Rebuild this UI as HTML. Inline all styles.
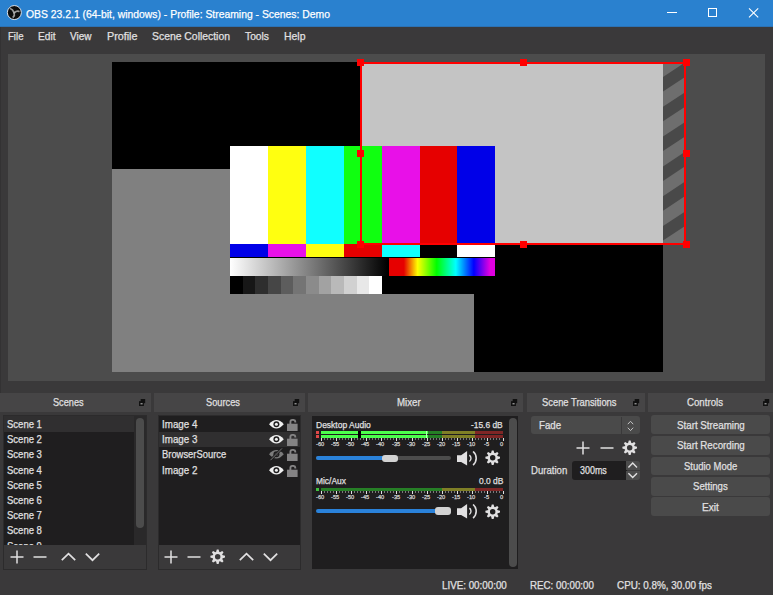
<!DOCTYPE html>
<html lang="en">
<head>
<meta charset="utf-8">
<title>OBS 23.2.1 (64-bit, windows) - Profile: Streaming - Scenes: Demo</title>
<style>
html,body{margin:0;padding:0;}
body{width:773px;height:595px;overflow:hidden;background:#3a393a;position:relative;
  font-family:"Liberation Sans",sans-serif;color:#e1e0e1;}
.abs,.t,i,svg.ic{position:absolute;}
.t{white-space:nowrap;line-height:0;height:0;transform-origin:0 0;color:#e1e0e1;display:block;-webkit-text-stroke:0.25px;}
i{display:block;width:1px;}
#titlebar{left:0;top:0;width:773px;height:27px;background:#2a81cf;}
#edge{left:0;top:27px;width:1px;height:366px;background:#333233;}
#preview{left:8px;top:54px;width:757px;height:327px;background:#4c4c4c;}
.dock{top:393px;height:18.5px;background:#464546;}
.list{background:#1f1e1f;overflow:hidden;}
.frame{border:1px solid #2c2b2c;box-sizing:border-box;}
.sel{background:#302f30;}
.sbar{background:#4c4c4c;border-radius:4px;}
.btn{left:651.2px;width:119.2px;height:18.8px;background:#4a4a4a;border-radius:3px;}
</style>
</head>
<body>
<!-- title bar -->
<div id="titlebar" class="abs"></div>
<div id="edge" class="abs"></div>
<div class="abs" style="left:0;top:26px;width:773px;height:1px;background:#2c72b4"></div>

<!-- preview -->
<div id="preview" class="abs">
<svg width="757" height="327" viewBox="8 54 757 327" style="position:absolute;left:0;top:0" shape-rendering="crispEdges">
  <defs>
    <linearGradient id="gw" x1="0" x2="1" y1="0" y2="0"><stop offset="0" stop-color="#fff"/><stop offset="1" stop-color="#000"/></linearGradient>
    <linearGradient id="rb" x1="0" x2="1" y1="0" y2="0">
      <stop offset="0" stop-color="#e60000"/><stop offset="0.14" stop-color="#e60000"/>
      <stop offset="0.27" stop-color="#ffff00"/><stop offset="0.45" stop-color="#00ff00"/>
      <stop offset="0.63" stop-color="#00ffff"/><stop offset="0.80" stop-color="#0000ff"/>
      <stop offset="0.95" stop-color="#e000e0"/><stop offset="1" stop-color="#e000e0"/>
    </linearGradient>
    <clipPath id="hc"><rect x="663" y="63" width="22.5" height="181"/></clipPath>
  </defs>
  <!-- canvas -->
  <rect x="112" y="62" width="551" height="310" fill="#000"/>
  <!-- Image 2: gray -->
  <rect x="112" y="169" width="362" height="203" fill="#808080"/>
  <!-- Image 3: light gray (selected) -->
  <rect x="361" y="63" width="302" height="181" fill="#c4c4c4"/>
  <rect x="663" y="63" width="22.5" height="181" fill="#6e6e6e"/>
  <g clip-path="url(#hc)" shape-rendering="geometricPrecision"><polygon points="663,17.4 685.5,2.5 685.5,17.0 663,31.9" fill="#494949"/><polygon points="663,47.2 685.5,32.4 685.5,46.9 663,61.7" fill="#494949"/><polygon points="663,77.0 685.5,62.1 685.5,76.7 663,91.5" fill="#494949"/><polygon points="663,106.8 685.5,91.9 685.5,106.4 663,121.3" fill="#494949"/><polygon points="663,136.6 685.5,121.8 685.5,136.2 663,151.1" fill="#494949"/><polygon points="663,166.4 685.5,151.6 685.5,166.1 663,180.9" fill="#494949"/><polygon points="663,196.2 685.5,181.3 685.5,195.8 663,210.7" fill="#494949"/><polygon points="663,226.0 685.5,211.2 685.5,225.7 663,240.5" fill="#494949"/><polygon points="663,255.8 685.5,241.0 685.5,255.5 663,270.3" fill="#494949"/></g>
  <!-- Image 4: colour bars -->
  <rect x="230" y="146" width="265" height="148.4" fill="#000"/>
  <rect x="230" y="146" width="38" height="98" fill="#ffffff"/>
  <rect x="268" y="146" width="38" height="98" fill="#ffff10"/>
  <rect x="306" y="146" width="38" height="98" fill="#10ffff"/>
  <rect x="344" y="146" width="38" height="98" fill="#10ff10"/>
  <rect x="382" y="146" width="38" height="98" fill="#e810e8"/>
  <rect x="420" y="146" width="37" height="98" fill="#e60000"/>
  <rect x="457" y="146" width="38" height="98" fill="#0000e8"/>
  <rect x="230" y="244" width="38" height="13" fill="#0000e8"/>
  <rect x="268" y="244" width="38" height="13" fill="#e810e8"/>
  <rect x="306" y="244" width="38" height="13" fill="#ffff10"/>
  <rect x="344" y="244" width="38" height="13" fill="#e60000"/>
  <rect x="382" y="244" width="38" height="13" fill="#10ffff"/>
  <rect x="420" y="244" width="37" height="13" fill="#000000"/>
  <rect x="457" y="244" width="38" height="13" fill="#ffffff"/>
  <rect x="230" y="258" width="158" height="17.6" fill="url(#gw)"/>
  <rect x="389" y="258" width="106" height="17.6" fill="url(#rb)"/>
  <g id="steps"></g>
  <rect x="230.00" y="276" width="12.97" height="18.4" fill="rgb(0,0,0)"/><rect x="242.67" y="276" width="12.97" height="18.4" fill="rgb(23,23,23)"/><rect x="255.33" y="276" width="12.97" height="18.4" fill="rgb(46,46,46)"/><rect x="268.00" y="276" width="12.97" height="18.4" fill="rgb(70,70,70)"/><rect x="280.67" y="276" width="12.97" height="18.4" fill="rgb(93,93,93)"/><rect x="293.33" y="276" width="12.97" height="18.4" fill="rgb(116,116,116)"/><rect x="306.00" y="276" width="12.97" height="18.4" fill="rgb(139,139,139)"/><rect x="318.67" y="276" width="12.97" height="18.4" fill="rgb(162,162,162)"/><rect x="331.33" y="276" width="12.97" height="18.4" fill="rgb(185,185,185)"/><rect x="344.00" y="276" width="12.97" height="18.4" fill="rgb(209,209,209)"/><rect x="356.67" y="276" width="12.97" height="18.4" fill="rgb(232,232,232)"/><rect x="369.33" y="276" width="12.97" height="18.4" fill="rgb(255,255,255)"/>
  <!-- selection box -->
  <g fill="none" stroke="#ff0000" stroke-width="2">
    <rect x="361" y="63" width="323.7" height="181"/>
  </g>
  <g fill="#ff0000">
    <rect x="356.6" y="59" width="7" height="6.8"/><rect x="519.5" y="59" width="7" height="6.8"/><rect x="683" y="59" width="7" height="6.8"/>
    <rect x="356.6" y="150" width="7" height="7"/><rect x="683" y="150" width="7" height="7"/>
    <rect x="356.6" y="241.4" width="7" height="7"/><rect x="519.5" y="241.4" width="7" height="7"/><rect x="683" y="241.4" width="7" height="7"/>
  </g>
</svg>
</div>

<!-- dock title bars -->
<div class="abs dock" style="left:0;width:151px"></div>
<div class="abs dock" style="left:154px;width:151px"></div>
<div class="abs dock" style="left:308px;width:215px"></div>
<div class="abs dock" style="left:527px;width:117.5px"></div>
<div class="abs dock" style="left:648px;width:125px"></div>

<!-- Scenes dock -->
<div class="abs frame" style="left:3px;top:415px;width:144px;height:155px"></div>
<div class="abs list" style="left:4px;top:416px;width:130px;height:128.7px">
  <div class="abs sel" style="left:0;top:0;width:130px;height:15.6px"></div>
<span class="t" style="left:3.1px;top:8.05px;font-size:11.4px;transform:scaleX(0.8347)">Scene 1</span>
<span class="t" style="left:3.1px;top:23.25px;font-size:11.4px;transform:scaleX(0.8347)">Scene 2</span>
<span class="t" style="left:3.1px;top:38.45px;font-size:11.4px;transform:scaleX(0.8347)">Scene 3</span>
<span class="t" style="left:3.1px;top:53.65px;font-size:11.4px;transform:scaleX(0.8347)">Scene 4</span>
<span class="t" style="left:3.1px;top:68.85px;font-size:11.4px;transform:scaleX(0.8347)">Scene 5</span>
<span class="t" style="left:3.1px;top:84.05px;font-size:11.4px;transform:scaleX(0.8347)">Scene 6</span>
<span class="t" style="left:3.1px;top:99.25px;font-size:11.4px;transform:scaleX(0.8347)">Scene 7</span>
<span class="t" style="left:3.1px;top:114.45px;font-size:11.4px;transform:scaleX(0.8347)">Scene 8</span>
<span class="t" style="left:3.1px;top:129.65px;font-size:11.4px;transform:scaleX(0.8347)">Scene 9</span>

</div>
<div class="abs" style="left:134px;top:416px;width:12px;height:128.7px;background:#2a292a"></div>
<div class="abs sbar" style="left:136px;top:418px;width:8px;height:110px"></div>

<!-- Sources dock -->
<div class="abs frame" style="left:157.5px;top:415px;width:143.5px;height:155px"></div>
<div class="abs list" style="left:158.5px;top:416px;width:141.8px;height:128.8px">
  <div class="abs sel" style="left:0;top:15.5px;width:143px;height:15.3px"></div>
</div>

<!-- Mixer dock -->
<div class="abs list" style="left:312px;top:415.5px;width:206.3px;height:153.8px"></div>
<div class="abs sbar" style="left:509px;top:418px;width:8px;height:149px"></div>
<!-- desktop audio meter -->
<div class="abs" style="left:316px;top:431px;width:3px;height:3px;background:#e04848"></div>
<div class="abs" style="left:316px;top:435px;width:3px;height:3px;background:#e04848"></div>
<div class="abs" style="left:321px;top:431px;width:182px;height:3px;background:linear-gradient(90deg,#4cff4c 0,#4cff4c 107.5px,#267f26 107.5px,#267f26 121px,#7f7f26 121px,#7f7f26 154.5px,#7f2626 154.5px)"></div>
<div class="abs" style="left:321px;top:435px;width:182px;height:3px;background:linear-gradient(90deg,#4cff4c 0,#4cff4c 107.5px,#267f26 107.5px,#267f26 121px,#7f7f26 121px,#7f7f26 154.5px,#7f2626 154.5px)"></div>
<div class="abs" style="left:358px;top:431px;width:3px;height:7px;background:#000"></div>
<div class="abs" style="left:426px;top:431px;width:1px;height:7px;background:#b4ffb4"></div>
<i style="left:320.50px;top:438px;height:2.5px;background:#e1e0e1"></i><i style="left:323.53px;top:438px;height:1.5px;background:#7a797a"></i><i style="left:326.57px;top:438px;height:1.5px;background:#7a797a"></i><i style="left:329.60px;top:438px;height:1.5px;background:#7a797a"></i><i style="left:332.63px;top:438px;height:1.5px;background:#7a797a"></i><i style="left:335.67px;top:438px;height:2.5px;background:#e1e0e1"></i><i style="left:338.70px;top:438px;height:1.5px;background:#7a797a"></i><i style="left:341.73px;top:438px;height:1.5px;background:#7a797a"></i><i style="left:344.77px;top:438px;height:1.5px;background:#7a797a"></i><i style="left:347.80px;top:438px;height:1.5px;background:#7a797a"></i><i style="left:350.83px;top:438px;height:2.5px;background:#e1e0e1"></i><i style="left:353.87px;top:438px;height:1.5px;background:#7a797a"></i><i style="left:356.90px;top:438px;height:1.5px;background:#7a797a"></i><i style="left:359.93px;top:438px;height:1.5px;background:#7a797a"></i><i style="left:362.97px;top:438px;height:1.5px;background:#7a797a"></i><i style="left:366.00px;top:438px;height:2.5px;background:#e1e0e1"></i><i style="left:369.03px;top:438px;height:1.5px;background:#7a797a"></i><i style="left:372.07px;top:438px;height:1.5px;background:#7a797a"></i><i style="left:375.10px;top:438px;height:1.5px;background:#7a797a"></i><i style="left:378.13px;top:438px;height:1.5px;background:#7a797a"></i><i style="left:381.17px;top:438px;height:2.5px;background:#e1e0e1"></i><i style="left:384.20px;top:438px;height:1.5px;background:#7a797a"></i><i style="left:387.23px;top:438px;height:1.5px;background:#7a797a"></i><i style="left:390.27px;top:438px;height:1.5px;background:#7a797a"></i><i style="left:393.30px;top:438px;height:1.5px;background:#7a797a"></i><i style="left:396.33px;top:438px;height:2.5px;background:#e1e0e1"></i><i style="left:399.37px;top:438px;height:1.5px;background:#7a797a"></i><i style="left:402.40px;top:438px;height:1.5px;background:#7a797a"></i><i style="left:405.43px;top:438px;height:1.5px;background:#7a797a"></i><i style="left:408.47px;top:438px;height:1.5px;background:#7a797a"></i><i style="left:411.50px;top:438px;height:2.5px;background:#e1e0e1"></i><i style="left:414.53px;top:438px;height:1.5px;background:#7a797a"></i><i style="left:417.57px;top:438px;height:1.5px;background:#7a797a"></i><i style="left:420.60px;top:438px;height:1.5px;background:#7a797a"></i><i style="left:423.63px;top:438px;height:1.5px;background:#7a797a"></i><i style="left:426.67px;top:438px;height:2.5px;background:#e1e0e1"></i><i style="left:429.70px;top:438px;height:1.5px;background:#7a797a"></i><i style="left:432.73px;top:438px;height:1.5px;background:#7a797a"></i><i style="left:435.77px;top:438px;height:1.5px;background:#7a797a"></i><i style="left:438.80px;top:438px;height:1.5px;background:#7a797a"></i><i style="left:441.83px;top:438px;height:2.5px;background:#e1e0e1"></i><i style="left:444.87px;top:438px;height:1.5px;background:#7a797a"></i><i style="left:447.90px;top:438px;height:1.5px;background:#7a797a"></i><i style="left:450.93px;top:438px;height:1.5px;background:#7a797a"></i><i style="left:453.97px;top:438px;height:1.5px;background:#7a797a"></i><i style="left:457.00px;top:438px;height:2.5px;background:#e1e0e1"></i><i style="left:460.03px;top:438px;height:1.5px;background:#7a797a"></i><i style="left:463.07px;top:438px;height:1.5px;background:#7a797a"></i><i style="left:466.10px;top:438px;height:1.5px;background:#7a797a"></i><i style="left:469.13px;top:438px;height:1.5px;background:#7a797a"></i><i style="left:472.17px;top:438px;height:2.5px;background:#e1e0e1"></i><i style="left:475.20px;top:438px;height:1.5px;background:#7a797a"></i><i style="left:478.23px;top:438px;height:1.5px;background:#7a797a"></i><i style="left:481.27px;top:438px;height:1.5px;background:#7a797a"></i><i style="left:484.30px;top:438px;height:1.5px;background:#7a797a"></i><i style="left:487.33px;top:438px;height:2.5px;background:#e1e0e1"></i><i style="left:490.37px;top:438px;height:1.5px;background:#7a797a"></i><i style="left:493.40px;top:438px;height:1.5px;background:#7a797a"></i><i style="left:496.43px;top:438px;height:1.5px;background:#7a797a"></i><i style="left:499.47px;top:438px;height:1.5px;background:#7a797a"></i><i style="left:502.50px;top:438px;height:2.5px;background:#e1e0e1"></i>
<span class="t" style="left:316.20px;top:444.12px;font-size:6px;color:#d4d4d4;transform:scaleX(0.95)">-60</span><span class="t" style="left:330.85px;top:444.12px;font-size:6px;color:#d4d4d4;transform:scaleX(0.95)">-55</span><span class="t" style="left:346.01px;top:444.12px;font-size:6px;color:#d4d4d4;transform:scaleX(0.95)">-50</span><span class="t" style="left:361.18px;top:444.12px;font-size:6px;color:#d4d4d4;transform:scaleX(0.95)">-45</span><span class="t" style="left:376.35px;top:444.12px;font-size:6px;color:#d4d4d4;transform:scaleX(0.95)">-40</span><span class="t" style="left:391.51px;top:444.12px;font-size:6px;color:#d4d4d4;transform:scaleX(0.95)">-35</span><span class="t" style="left:406.68px;top:444.12px;font-size:6px;color:#d4d4d4;transform:scaleX(0.95)">-30</span><span class="t" style="left:421.85px;top:444.12px;font-size:6px;color:#d4d4d4;transform:scaleX(0.95)">-25</span><span class="t" style="left:437.01px;top:444.12px;font-size:6px;color:#d4d4d4;transform:scaleX(0.95)">-20</span><span class="t" style="left:452.18px;top:444.12px;font-size:6px;color:#d4d4d4;transform:scaleX(0.95)">-15</span><span class="t" style="left:467.35px;top:444.12px;font-size:6px;color:#d4d4d4;transform:scaleX(0.95)">-10</span><span class="t" style="left:484.10px;top:444.12px;font-size:6px;color:#d4d4d4;transform:scaleX(0.95)">-5</span><span class="t" style="left:500.42px;top:444.12px;font-size:6px;color:#d4d4d4;transform:scaleX(0.95)">0</span>
<!-- desktop slider -->
<div class="abs" style="left:316px;top:456px;width:135px;height:4px;border-radius:2px;background:#4c4c4c"></div>
<div class="abs" style="left:316px;top:456px;width:75px;height:4px;border-radius:2px;background:#2a82da"></div>
<div class="abs" style="left:381.7px;top:454.6px;width:16px;height:7.5px;border-radius:3px;background:#d2d2d2"></div>
<!-- mic meter -->
<div class="abs" style="left:316px;top:488px;width:3px;height:3px;background:#3fbf3f"></div>
<div class="abs" style="left:321px;top:488px;width:182px;height:3px;background:linear-gradient(90deg,#267f26 0,#267f26 121px,#7f7f26 121px,#7f7f26 154.5px,#7f2626 154.5px)"></div>
<i style="left:320.50px;top:491px;height:2.5px;background:#e1e0e1"></i><i style="left:323.53px;top:491px;height:1.5px;background:#7a797a"></i><i style="left:326.57px;top:491px;height:1.5px;background:#7a797a"></i><i style="left:329.60px;top:491px;height:1.5px;background:#7a797a"></i><i style="left:332.63px;top:491px;height:1.5px;background:#7a797a"></i><i style="left:335.67px;top:491px;height:2.5px;background:#e1e0e1"></i><i style="left:338.70px;top:491px;height:1.5px;background:#7a797a"></i><i style="left:341.73px;top:491px;height:1.5px;background:#7a797a"></i><i style="left:344.77px;top:491px;height:1.5px;background:#7a797a"></i><i style="left:347.80px;top:491px;height:1.5px;background:#7a797a"></i><i style="left:350.83px;top:491px;height:2.5px;background:#e1e0e1"></i><i style="left:353.87px;top:491px;height:1.5px;background:#7a797a"></i><i style="left:356.90px;top:491px;height:1.5px;background:#7a797a"></i><i style="left:359.93px;top:491px;height:1.5px;background:#7a797a"></i><i style="left:362.97px;top:491px;height:1.5px;background:#7a797a"></i><i style="left:366.00px;top:491px;height:2.5px;background:#e1e0e1"></i><i style="left:369.03px;top:491px;height:1.5px;background:#7a797a"></i><i style="left:372.07px;top:491px;height:1.5px;background:#7a797a"></i><i style="left:375.10px;top:491px;height:1.5px;background:#7a797a"></i><i style="left:378.13px;top:491px;height:1.5px;background:#7a797a"></i><i style="left:381.17px;top:491px;height:2.5px;background:#e1e0e1"></i><i style="left:384.20px;top:491px;height:1.5px;background:#7a797a"></i><i style="left:387.23px;top:491px;height:1.5px;background:#7a797a"></i><i style="left:390.27px;top:491px;height:1.5px;background:#7a797a"></i><i style="left:393.30px;top:491px;height:1.5px;background:#7a797a"></i><i style="left:396.33px;top:491px;height:2.5px;background:#e1e0e1"></i><i style="left:399.37px;top:491px;height:1.5px;background:#7a797a"></i><i style="left:402.40px;top:491px;height:1.5px;background:#7a797a"></i><i style="left:405.43px;top:491px;height:1.5px;background:#7a797a"></i><i style="left:408.47px;top:491px;height:1.5px;background:#7a797a"></i><i style="left:411.50px;top:491px;height:2.5px;background:#e1e0e1"></i><i style="left:414.53px;top:491px;height:1.5px;background:#7a797a"></i><i style="left:417.57px;top:491px;height:1.5px;background:#7a797a"></i><i style="left:420.60px;top:491px;height:1.5px;background:#7a797a"></i><i style="left:423.63px;top:491px;height:1.5px;background:#7a797a"></i><i style="left:426.67px;top:491px;height:2.5px;background:#e1e0e1"></i><i style="left:429.70px;top:491px;height:1.5px;background:#7a797a"></i><i style="left:432.73px;top:491px;height:1.5px;background:#7a797a"></i><i style="left:435.77px;top:491px;height:1.5px;background:#7a797a"></i><i style="left:438.80px;top:491px;height:1.5px;background:#7a797a"></i><i style="left:441.83px;top:491px;height:2.5px;background:#e1e0e1"></i><i style="left:444.87px;top:491px;height:1.5px;background:#7a797a"></i><i style="left:447.90px;top:491px;height:1.5px;background:#7a797a"></i><i style="left:450.93px;top:491px;height:1.5px;background:#7a797a"></i><i style="left:453.97px;top:491px;height:1.5px;background:#7a797a"></i><i style="left:457.00px;top:491px;height:2.5px;background:#e1e0e1"></i><i style="left:460.03px;top:491px;height:1.5px;background:#7a797a"></i><i style="left:463.07px;top:491px;height:1.5px;background:#7a797a"></i><i style="left:466.10px;top:491px;height:1.5px;background:#7a797a"></i><i style="left:469.13px;top:491px;height:1.5px;background:#7a797a"></i><i style="left:472.17px;top:491px;height:2.5px;background:#e1e0e1"></i><i style="left:475.20px;top:491px;height:1.5px;background:#7a797a"></i><i style="left:478.23px;top:491px;height:1.5px;background:#7a797a"></i><i style="left:481.27px;top:491px;height:1.5px;background:#7a797a"></i><i style="left:484.30px;top:491px;height:1.5px;background:#7a797a"></i><i style="left:487.33px;top:491px;height:2.5px;background:#e1e0e1"></i><i style="left:490.37px;top:491px;height:1.5px;background:#7a797a"></i><i style="left:493.40px;top:491px;height:1.5px;background:#7a797a"></i><i style="left:496.43px;top:491px;height:1.5px;background:#7a797a"></i><i style="left:499.47px;top:491px;height:1.5px;background:#7a797a"></i><i style="left:502.50px;top:491px;height:2.5px;background:#e1e0e1"></i>
<span class="t" style="left:316.20px;top:496.82px;font-size:6px;color:#d4d4d4;transform:scaleX(0.95)">-60</span><span class="t" style="left:330.85px;top:496.82px;font-size:6px;color:#d4d4d4;transform:scaleX(0.95)">-55</span><span class="t" style="left:346.01px;top:496.82px;font-size:6px;color:#d4d4d4;transform:scaleX(0.95)">-50</span><span class="t" style="left:361.18px;top:496.82px;font-size:6px;color:#d4d4d4;transform:scaleX(0.95)">-45</span><span class="t" style="left:376.35px;top:496.82px;font-size:6px;color:#d4d4d4;transform:scaleX(0.95)">-40</span><span class="t" style="left:391.51px;top:496.82px;font-size:6px;color:#d4d4d4;transform:scaleX(0.95)">-35</span><span class="t" style="left:406.68px;top:496.82px;font-size:6px;color:#d4d4d4;transform:scaleX(0.95)">-30</span><span class="t" style="left:421.85px;top:496.82px;font-size:6px;color:#d4d4d4;transform:scaleX(0.95)">-25</span><span class="t" style="left:437.01px;top:496.82px;font-size:6px;color:#d4d4d4;transform:scaleX(0.95)">-20</span><span class="t" style="left:452.18px;top:496.82px;font-size:6px;color:#d4d4d4;transform:scaleX(0.95)">-15</span><span class="t" style="left:467.35px;top:496.82px;font-size:6px;color:#d4d4d4;transform:scaleX(0.95)">-10</span><span class="t" style="left:484.10px;top:496.82px;font-size:6px;color:#d4d4d4;transform:scaleX(0.95)">-5</span><span class="t" style="left:500.42px;top:496.82px;font-size:6px;color:#d4d4d4;transform:scaleX(0.95)">0</span>
<!-- mic slider -->
<div class="abs" style="left:316px;top:508.5px;width:135px;height:4px;border-radius:2px;background:#2a82da"></div>
<div class="abs" style="left:434.5px;top:507px;width:16.5px;height:7.5px;border-radius:3px;background:#d2d2d2"></div>

<!-- Scene Transitions -->
<div class="abs" style="left:531.2px;top:416.2px;width:108.8px;height:17.8px;background:#4a4a4a;border-radius:3px"></div>
<div class="abs" style="left:621px;top:416.5px;width:1px;height:17.5px;background:#3a393a"></div>
<div class="abs" style="left:571.5px;top:461px;width:55px;height:19px;background:#1f1e1f;border-radius:3px 0 0 3px"></div>
<div class="abs" style="left:625.7px;top:461px;width:14px;height:9.3px;background:#4c4c4c;border-radius:0 3px 0 0"></div>
<div class="abs" style="left:625.7px;top:471.2px;width:14px;height:8.6px;background:#4c4c4c;border-radius:0 0 3px 0"></div>

<!-- Controls -->
<div class="abs btn" style="top:415.3px"></div>
<div class="abs btn" style="top:435.9px"></div>
<div class="abs btn" style="top:456.5px"></div>
<div class="abs btn" style="top:477px"></div>
<div class="abs btn" style="top:497.4px"></div>

<!-- OBS logo -->
<svg class="ic" style="left:6px;top:4px" width="17" height="17" viewBox="6 4 17 17">
  <circle cx="14.35" cy="12.55" r="7.0" fill="#0d0d0d" stroke="#f0f4fa" stroke-width="0.9"/>
  <circle cx="14.2" cy="12.7" r="0.9" fill="#e8e8e8"/>
  <g fill="none" stroke="#a9a9a9" stroke-width="1.7" stroke-linecap="round" opacity="0.9">
    <path d="M10.6 8.8 Q12.6 9.4 13.9 12.3"/>
    <path d="M14.6 12.6 Q16.6 10.6 18.8 11.4"/>
    <path d="M14.2 13.0 Q14.9 15.6 13.2 17.0"/>
  </g>
</svg>
<!-- window controls -->
<svg class="ic" style="left:660px;top:0" width="113" height="27" viewBox="660 0 113 27" shape-rendering="crispEdges">
  <rect x="667" y="12" width="10" height="1" fill="#fff"/>
  <rect x="708.5" y="8.5" width="8" height="8" fill="none" stroke="#fff" stroke-width="1"/>
  <path d="M749 8.3 L758.2 17.3 M758.2 8.3 L749 17.3" stroke="#fff" stroke-width="1.1" fill="none" shape-rendering="geometricPrecision"/>
</svg>
<!-- dock float icons -->
<svg width="0" height="0" style="position:absolute"><defs>
  <g id="flt"><rect x="1.7" y="0" width="4.5" height="4.2" fill="#111"/><rect x="0" y="2.2" width="4.9" height="4.8" fill="#111"/><rect x="1.5" y="4.1" width="2.1" height="1.3" fill="#9a9a9a"/></g>
  <g id="plus"><path d="M7 0.5V13.5M0.5 7H13.5" stroke="#e1e0e1" stroke-width="1.5" fill="none"/></g>
  <g id="minus"><path d="M0.5 7H13.5" stroke="#e1e0e1" stroke-width="1.5" fill="none"/></g>
  <g id="up"><path d="M0.8 8.2L7.5 1.6L14.2 8.2" stroke="#e1e0e1" stroke-width="1.7" fill="none"/></g>
  <g id="down"><path d="M0.8 1.6L7.5 8.2L14.2 1.6" stroke="#e1e0e1" stroke-width="1.7" fill="none"/></g>
  <g id="gear">
    <g fill="#e1e0e1"><path d="M-1.75 -4.5L-0.95 -7.6H0.95L1.75 -4.5Z" transform="rotate(0)"/><path d="M-1.75 -4.5L-0.95 -7.6H0.95L1.75 -4.5Z" transform="rotate(45)"/><path d="M-1.75 -4.5L-0.95 -7.6H0.95L1.75 -4.5Z" transform="rotate(90)"/><path d="M-1.75 -4.5L-0.95 -7.6H0.95L1.75 -4.5Z" transform="rotate(135)"/><path d="M-1.75 -4.5L-0.95 -7.6H0.95L1.75 -4.5Z" transform="rotate(180)"/><path d="M-1.75 -4.5L-0.95 -7.6H0.95L1.75 -4.5Z" transform="rotate(225)"/><path d="M-1.75 -4.5L-0.95 -7.6H0.95L1.75 -4.5Z" transform="rotate(270)"/><path d="M-1.75 -4.5L-0.95 -7.6H0.95L1.75 -4.5Z" transform="rotate(315)"/><circle r="5.2"/></g>
    <circle r="2.85" fill="#1f1e1f"/>
  </g>
  <g id="gear2">
    <g fill="#e1e0e1"><path d="M-1.75 -4.5L-0.95 -7.6H0.95L1.75 -4.5Z" transform="rotate(0)"/><path d="M-1.75 -4.5L-0.95 -7.6H0.95L1.75 -4.5Z" transform="rotate(45)"/><path d="M-1.75 -4.5L-0.95 -7.6H0.95L1.75 -4.5Z" transform="rotate(90)"/><path d="M-1.75 -4.5L-0.95 -7.6H0.95L1.75 -4.5Z" transform="rotate(135)"/><path d="M-1.75 -4.5L-0.95 -7.6H0.95L1.75 -4.5Z" transform="rotate(180)"/><path d="M-1.75 -4.5L-0.95 -7.6H0.95L1.75 -4.5Z" transform="rotate(225)"/><path d="M-1.75 -4.5L-0.95 -7.6H0.95L1.75 -4.5Z" transform="rotate(270)"/><path d="M-1.75 -4.5L-0.95 -7.6H0.95L1.75 -4.5Z" transform="rotate(315)"/><circle r="5.2"/></g>
    <circle r="2.85" fill="#3a393a"/>
  </g>
  <g id="spk">
    <path d="M0 4.3H4.1L10.1 0V14.5L4.1 10.9H0Z" fill="#e1e0e1"/>
    <path d="M12.4 4.1A4 4 0 0 1 12.4 10.5" stroke="#e1e0e1" stroke-width="1.4" fill="none"/>
    <path d="M16.1 0.5A9 9 0 0 1 16.1 14.1" stroke="#e1e0e1" stroke-width="1.6" fill="none"/>
  </g>
  <g id="eye">
    <path d="M0 4.2Q7.4 -4.2 14.8 4.2Q7.4 12.6 0 4.2Z" fill="#f0f0f0"/>
    <circle cx="7.4" cy="4.2" r="3.0" fill="#1f1e1f"/>
    <circle cx="7.4" cy="4.2" r="1.5" fill="#f0f0f0"/>
  </g>
  <g id="eyeoff">
    <path d="M0 4.2Q7.4 -4.2 14.8 4.2Q7.4 12.6 0 4.2Z" fill="#7c7c7c"/>
    <circle cx="7.4" cy="4.2" r="3.0" fill="#1f1e1f"/>
    <circle cx="7.4" cy="4.2" r="1.5" fill="#7c7c7c"/>
    <path d="M1.5 10.2L13 -1.6" stroke="#1f1e1f" stroke-width="2.6"/>
    <path d="M1.5 10.2L13 -1.6" stroke="#7c7c7c" stroke-width="0.9"/>
  </g>
  <g id="lock">
    <rect x="0" y="4.7" width="10.6" height="7.3" fill="#848384"/>
    <path d="M3.4 5V2.7Q3.4 0.9 5.8 0.9Q8.3 0.9 8.3 2.7V3.5" stroke="#848384" stroke-width="1.9" fill="none"/>
  </g>
</defs></svg>
<svg class="ic" style="left:139px;top:399px" width="8" height="8"><use href="#flt"/></svg>
<svg class="ic" style="left:293px;top:399px" width="8" height="8"><use href="#flt"/></svg>
<svg class="ic" style="left:511px;top:399px" width="8" height="8"><use href="#flt"/></svg>
<svg class="ic" style="left:633px;top:399px" width="8" height="8"><use href="#flt"/></svg>
<svg class="ic" style="left:762.5px;top:399px" width="8" height="8"><use href="#flt"/></svg>

<!-- scenes toolbar -->
<svg class="ic" style="left:10px;top:550px" width="14" height="14"><use href="#plus"/></svg>
<svg class="ic" style="left:33px;top:550px" width="14" height="14"><use href="#minus"/></svg>
<svg class="ic" style="left:61px;top:552px" width="15" height="10"><use href="#up"/></svg>
<svg class="ic" style="left:85px;top:552px" width="15" height="10"><use href="#down"/></svg>
<!-- sources toolbar -->
<svg class="ic" style="left:164px;top:550px" width="14" height="14"><use href="#plus"/></svg>
<svg class="ic" style="left:187px;top:550px" width="14" height="14"><use href="#minus"/></svg>
<svg class="ic" style="left:209.5px;top:548.7px" width="15.4" height="15.4" viewBox="-8 -8 16 16"><use href="#gear2"/></svg>
<svg class="ic" style="left:238.5px;top:552px" width="15" height="10"><use href="#up"/></svg>
<svg class="ic" style="left:262.5px;top:552px" width="15" height="10"><use href="#down"/></svg>
<!-- sources row icons -->
<svg class="ic" style="left:268.5px;top:420.2px" width="15" height="9"><use href="#eye"/></svg>
<svg class="ic" style="left:268.5px;top:435.3px" width="15" height="9"><use href="#eye"/></svg>
<svg class="ic" style="left:268.5px;top:448.4px;overflow:visible" width="15" height="12" viewBox="0 -2 15 12"><use href="#eyeoff"/></svg>
<svg class="ic" style="left:268.5px;top:465.6px" width="15" height="9"><use href="#eye"/></svg>
<svg class="ic" style="left:286.8px;top:418.6px" width="11" height="12"><use href="#lock"/></svg>
<svg class="ic" style="left:286.8px;top:433.9px" width="11" height="12"><use href="#lock"/></svg>
<svg class="ic" style="left:286.8px;top:449.2px" width="11" height="12"><use href="#lock"/></svg>
<svg class="ic" style="left:286.8px;top:464.5px" width="11" height="12"><use href="#lock"/></svg>
<!-- mixer icons -->
<svg class="ic" style="left:456.8px;top:450.8px" width="21" height="15"><use href="#spk"/></svg>
<svg class="ic" style="left:484.9px;top:450.4px" width="15.4" height="15.4" viewBox="-8 -8 16 16"><use href="#gear"/></svg>
<svg class="ic" style="left:457px;top:504.2px" width="21" height="15"><use href="#spk"/></svg>
<svg class="ic" style="left:485.2px;top:503.5px" width="15.4" height="15.4" viewBox="-8 -8 16 16"><use href="#gear"/></svg>
<!-- transitions icons -->
<svg class="ic" style="left:576.4px;top:440.6px" width="14" height="14"><use href="#plus"/></svg>
<svg class="ic" style="left:599.7px;top:440.6px" width="14" height="14"><use href="#minus"/></svg>
<svg class="ic" style="left:621.7px;top:439.6px" width="15.4" height="15.4" viewBox="-8 -8 16 16"><use href="#gear2"/></svg>
<svg class="ic" style="left:626px;top:419px" width="9" height="14" viewBox="626 419 9 14"><path d="M627.8 424.2L630.5 421.3L633.2 424.2M627.8 427.7L630.5 430.6L633.2 427.7" stroke="#c4c4c4" stroke-width="1" fill="none"/></svg>
<svg class="ic" style="left:626px;top:461px" width="14" height="19" viewBox="626 461 14 19"><path d="M628.4 467.4L632.7 463.1L637 467.4M628.4 473.2L632.7 477.5L637 473.2" stroke="#e1e0e1" stroke-width="1.4" fill="none"/></svg>

<span class="t" style="left:26.0px;top:13.55px;font-size:11.4px;color:#ffffff;transform:scaleX(0.9112);">OBS 23.2.1 (64-bit, windows) - Profile: Streaming - Scenes: Demo</span>
<span class="t" style="left:7.5px;top:36.05px;font-size:11.4px;color:#e1e0e1;transform:scaleX(0.8443);">File</span>
<span class="t" style="left:37.5px;top:36.05px;font-size:11.4px;color:#e1e0e1;transform:scaleX(0.8910);">Edit</span>
<span class="t" style="left:70.0px;top:36.05px;font-size:11.4px;color:#e1e0e1;transform:scaleX(0.8781);">View</span>
<span class="t" style="left:106.5px;top:36.05px;font-size:11.4px;color:#e1e0e1;transform:scaleX(0.9444);">Profile</span>
<span class="t" style="left:151.5px;top:36.05px;font-size:11.4px;color:#e1e0e1;transform:scaleX(0.9124);">Scene Collection</span>
<span class="t" style="left:245.0px;top:36.05px;font-size:11.4px;color:#e1e0e1;transform:scaleX(0.9025);">Tools</span>
<span class="t" style="left:284.0px;top:36.05px;font-size:11.4px;color:#e1e0e1;transform:scaleX(0.9173);">Help</span>
<span class="t" style="left:53.0px;top:402.45px;font-size:11.4px;color:#e1e0e1;transform:scaleX(0.8053);">Scenes</span>
<span class="t" style="left:205.5px;top:402.45px;font-size:11.4px;color:#e1e0e1;transform:scaleX(0.8111);">Sources</span>
<span class="t" style="left:396.6px;top:402.45px;font-size:11.4px;color:#e1e0e1;transform:scaleX(0.8512);">Mixer</span>
<span class="t" style="left:541.5px;top:402.45px;font-size:11.4px;color:#e1e0e1;transform:scaleX(0.8228);">Scene Transitions</span>
<span class="t" style="left:686.8px;top:402.45px;font-size:11.4px;color:#e1e0e1;transform:scaleX(0.8486);">Controls</span>
<span class="t" style="left:161.8px;top:423.75px;font-size:11.4px;color:#e1e0e1;transform:scaleX(0.8598);">Image 4</span>
<span class="t" style="left:161.8px;top:439.05px;font-size:11.4px;color:#e1e0e1;transform:scaleX(0.8598);">Image 3</span>
<span class="t" style="left:161.8px;top:454.35px;font-size:11.4px;color:#e1e0e1;transform:scaleX(0.8244);">BrowserSource</span>
<span class="t" style="left:161.8px;top:469.65px;font-size:11.4px;color:#e1e0e1;transform:scaleX(0.8598);">Image 2</span>
<span class="t" style="left:316.4px;top:424.71px;font-size:9.5px;color:#e1e0e1;transform:scaleX(0.8945);">Desktop Audio</span>
<span class="t" style="left:471.3px;top:424.71px;font-size:9.5px;color:#e1e0e1;transform:scaleX(0.8825);">-15.6 dB</span>
<span class="t" style="left:316.4px;top:480.91px;font-size:9.5px;color:#e1e0e1;transform:scaleX(0.8847);">Mic/Aux</span>
<span class="t" style="left:478.6px;top:480.91px;font-size:9.5px;color:#e1e0e1;transform:scaleX(0.8883);">0.0 dB</span>
<span class="t" style="left:539.4px;top:425.35px;font-size:11.4px;color:#e1e0e1;transform:scaleX(0.8510);">Fade</span>
<span class="t" style="left:531.0px;top:470.35px;font-size:11.4px;color:#e1e0e1;transform:scaleX(0.8430);">Duration</span>
<span class="t" style="left:580.0px;top:470.35px;font-size:11.4px;color:#e1e0e1;transform:scaleX(0.7836);">300ms</span>
<span class="t" style="left:676.5px;top:424.75px;font-size:11.4px;color:#e1e0e1;transform:scaleX(0.8567);">Start Streaming</span>
<span class="t" style="left:676.5px;top:445.35px;font-size:11.4px;color:#e1e0e1;transform:scaleX(0.8567);">Start Recording</span>
<span class="t" style="left:683.8px;top:465.85px;font-size:11.4px;color:#e1e0e1;transform:scaleX(0.8317);">Studio Mode</span>
<span class="t" style="left:692.9px;top:486.35px;font-size:11.4px;color:#e1e0e1;transform:scaleX(0.8452);">Settings</span>
<span class="t" style="left:701.6px;top:506.85px;font-size:11.4px;color:#e1e0e1;transform:scaleX(0.8842);">Exit</span>
<span class="t" style="left:442.0px;top:585.99px;font-size:10.4px;color:#e1e0e1;transform:scaleX(0.9425);">LIVE: 00:00:00</span>
<span class="t" style="left:529.6px;top:585.99px;font-size:10.4px;color:#e1e0e1;transform:scaleX(0.9373);">REC: 00:00:00</span>
<span class="t" style="left:617.3px;top:585.99px;font-size:10.4px;color:#e1e0e1;transform:scaleX(0.9497);">CPU: 0.8%, 30.00 fps</span>
</body>
</html>
